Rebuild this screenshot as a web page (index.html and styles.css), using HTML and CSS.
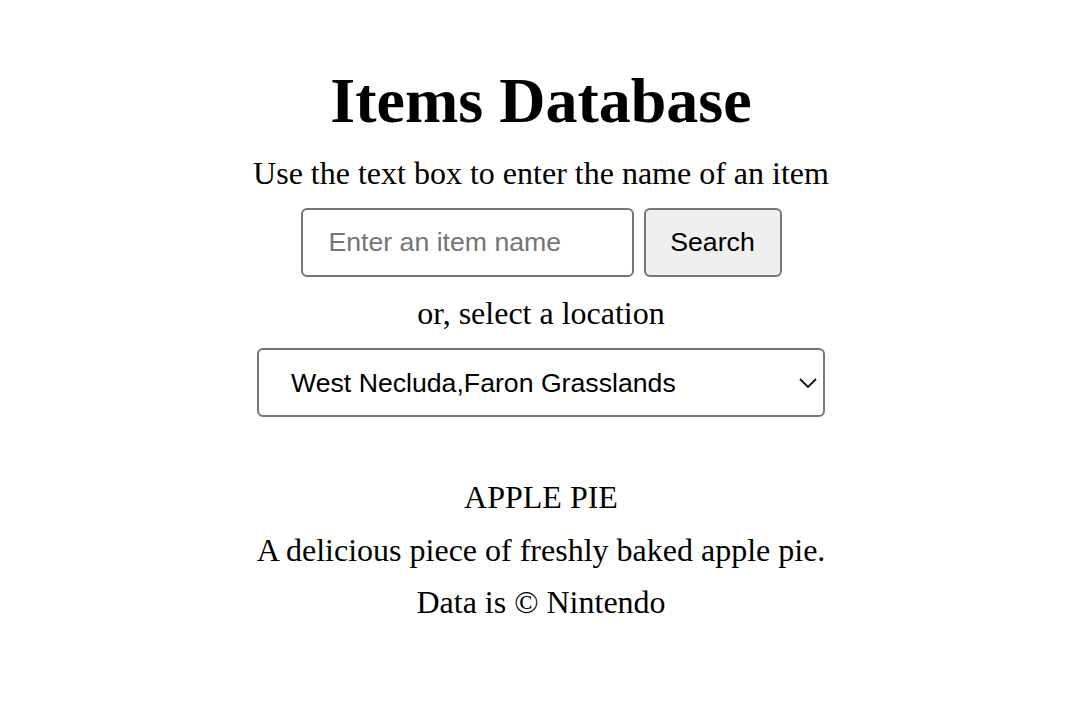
FILE: index.html
```html
<!DOCTYPE html>
<html lang="en">
<head>
<meta charset="utf-8">
<title>Items Database</title>
<link rel="stylesheet" href="styles.css">
</head>
<body>
<main class="page">
  <h1 class="title">Items Database</h1>
  <p class="hint">Use the text box to enter the name of an item</p>
  <form class="search-row" onsubmit="return false;">
    <input class="search-input" type="text" placeholder="Enter an item name">
    <button class="search-button" type="submit">Search</button>
  </form>
  <p class="hint hint-or">or, select a location</p>
  <div class="select-wrap">
    <select class="location-select">
      <option>West Necluda,Faron Grasslands</option>
    </select>
    <svg class="chevron" width="18" height="10" viewBox="0 0 18 10" aria-hidden="true">
      <path d="M1 1 L9 9 L17 1" fill="none" stroke="#111" stroke-width="1.8"/>
    </svg>
  </div>
  <section class="result">
    <p class="item-name">APPLE PIE</p>
    <p class="item-desc">A delicious piece of freshly baked apple pie.</p>
    <p class="credit">Data is © Nintendo</p>
  </section>
</main>
</body>
</html>
```

FILE: styles.css
```css
html, body {
  margin: 0;
  padding: 0;
  background: #ffffff;
}

body {
  font-family: "Liberation Serif", "Times New Roman", serif;
  color: #000000;
}

.page {
  display: flex;
  flex-direction: column;
  align-items: center;
  padding-top: 64px;
  padding-left: 5px;
}

.title {
  margin: 0;
  font-size: 64px;
  line-height: 74px;
  font-weight: bold;
}

.hint {
  margin: 17px 0 0 0;
  font-size: 32px;
  line-height: 37px;
}

.hint-or {
  margin-top: 18px;
}

.search-row {
  display: flex;
  gap: 10px;
  margin: 16px 0 0 0;
}

.search-input {
  box-sizing: border-box;
  width: 333px;
  height: 69px;
  margin: 0;
  padding: 0 0 0 26px;
  border: 2px solid #767676;
  border-radius: 6px;
  font-family: "Liberation Sans", Arial, sans-serif;
  font-size: 26.67px;
  color: #000000;
  background: #ffffff;
  outline: none;
}

.search-input::placeholder {
  color: #757575;
  opacity: 1;
}

.search-button {
  box-sizing: border-box;
  width: 138px;
  height: 69px;
  margin: 0;
  padding: 0;
  border: 2px solid #767676;
  border-radius: 6px;
  background: #efefef;
  font-family: "Liberation Sans", Arial, sans-serif;
  font-size: 26.67px;
  color: #000000;
}

.select-wrap {
  position: relative;
  margin-top: 16px;
}

.location-select {
  appearance: none;
  -webkit-appearance: none;
  box-sizing: border-box;
  width: 568px;
  height: 69px;
  margin: 0;
  padding: 0 0 0 32px;
  border: 2px solid #767676;
  border-radius: 6px;
  background: #ffffff;
  font-family: "Liberation Sans", Arial, sans-serif;
  font-size: 26.67px;
  color: #000000;
}

.chevron {
  position: absolute;
  right: 8px;
  top: 30px;
  pointer-events: none;
}

.result {
  display: flex;
  flex-direction: column;
  align-items: center;
  margin-top: 62px;
}

.item-name,
.item-desc,
.credit {
  margin: 0;
  font-size: 32px;
  line-height: 37px;
}

.item-desc {
  margin-top: 16px;
}

.credit {
  margin-top: 15px;
}
```
